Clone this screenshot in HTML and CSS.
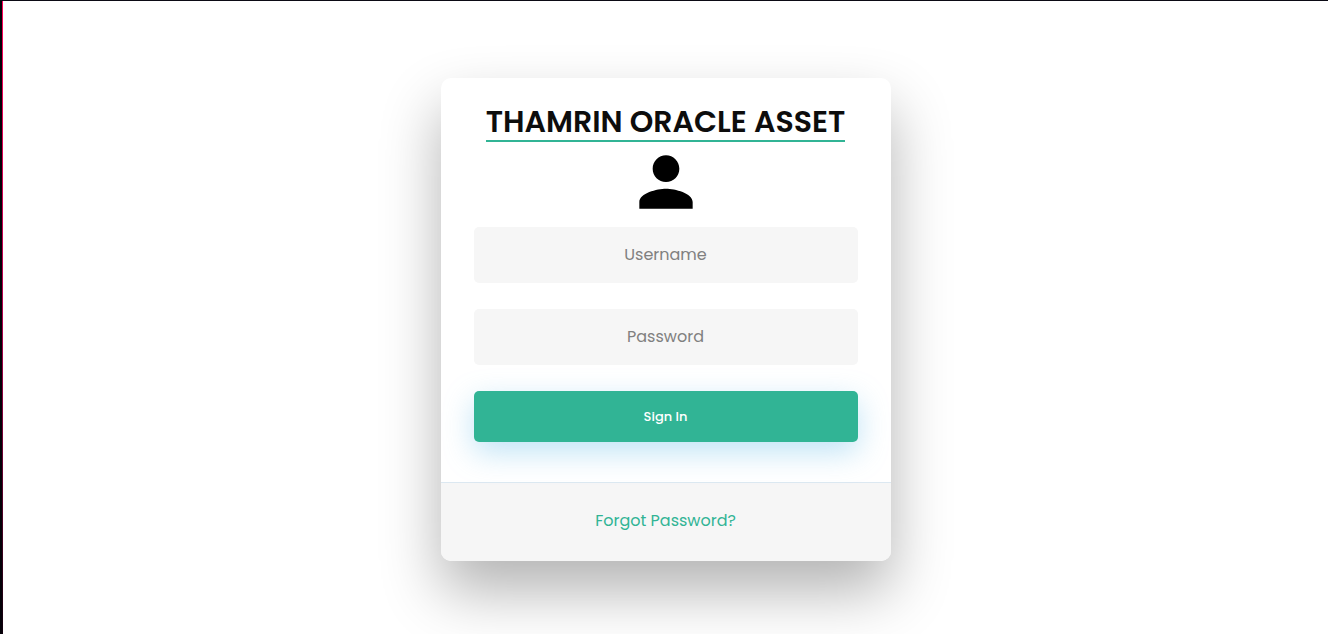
FILE: index.html
```html
<!DOCTYPE html>
<html lang="en">
<head>
<meta charset="utf-8">
<meta name="viewport" content="width=device-width, initial-scale=1">
<title>Thamrin Oracle Asset</title>
<link rel="stylesheet" href="styles.css">
</head>
<body>
<div class="page">
  <div class="edge"></div>
  <main class="wrapper">
    <section class="card">
      <form class="form">
        <h1 class="title">THAMRIN ORACLE ASSET</h1>
        <svg class="avatar" viewBox="0 0 24 24" aria-hidden="true">
          <path d="M12 12c2.21 0 4-1.79 4-4s-1.79-4-4-4-4 1.790-4 4 1.790 4 4 4zm0 2c-2.670 0-8 1.340-8 4v2h16v-2c0-2.660-5.330-4-8-4z"/>
        </svg>
        <input class="field" type="text" placeholder="Username" aria-label="Username">
        <input class="field" type="password" placeholder="Password" aria-label="Password">
        <button class="submit" type="submit">Sign In</button>
      </form>
      <footer class="footer">
        <a class="link" href="#">Forgot Password?</a>
      </footer>
    </section>
  </main>
</div>
</body>
</html>
```
FILE: styles.css
```css
* {
  box-sizing: border-box;
}

body {
  margin: 0;
  background: #fff;
  font-family: Poppins, Inter, sans-serif;
  font-size: 16px;
}

.page {
  display: flex;
  min-height: 100vh;
  border-top: 1px solid #0b0a14;
}

.edge {
  width: 3px;
  background:
    linear-gradient(#ff0058, #b0004c 50%, #10000c) right / 1px 100% no-repeat,
    #040108;
}

.wrapper {
  flex: 1;
  display: flex;
  justify-content: center;
  align-items: flex-start;
  padding: 77px 20px 20px;
  overflow: hidden;
}

.card {
  width: 100%;
  max-width: 450px;
  border-radius: 10px;
  background: #fff;
  box-shadow: 0 30px 60px rgba(0, 0, 0, 0.3);
  text-align: center;
}

.form {
  display: flex;
  flex-direction: column;
  align-items: center;
  padding: 26px 33px 40px;
}

.title {
  margin: 0;
  border-bottom: 2px solid #31b495;
  color: #0d0d0d;
  font-size: 30px;
  font-weight: 600;
  line-height: 36px;
}

.avatar {
  width: 80px;
  height: 80px;
  margin-bottom: 5px;
}

.field {
  width: 100%;
  height: 56px;
  margin: 0 0 26px;
  padding: 0 32px 2px;
  border: 0;
  border-radius: 5px;
  background: #f6f6f6;
  color: #0d0d0d;
  font: inherit;
  text-align: center;
}

.field::placeholder {
  color: #808080;
}

.submit {
  width: 100%;
  height: 51px;
  border: 0;
  border-radius: 5px;
  background: #31b495;
  box-shadow: 0 10px 30px rgba(95, 186, 233, 0.4);
  color: #fff;
  font-family: inherit;
  font-size: 13px;
  font-weight: 500;
}

.footer {
  padding: 24px 24px 26px;
  border-top: 1px solid #dce8f1;
  border-radius: 0 0 10px 10px;
  background: #f6f6f6;
  line-height: 28px;
}

.link {
  color: #31b495;
  text-decoration: none;
}
```
